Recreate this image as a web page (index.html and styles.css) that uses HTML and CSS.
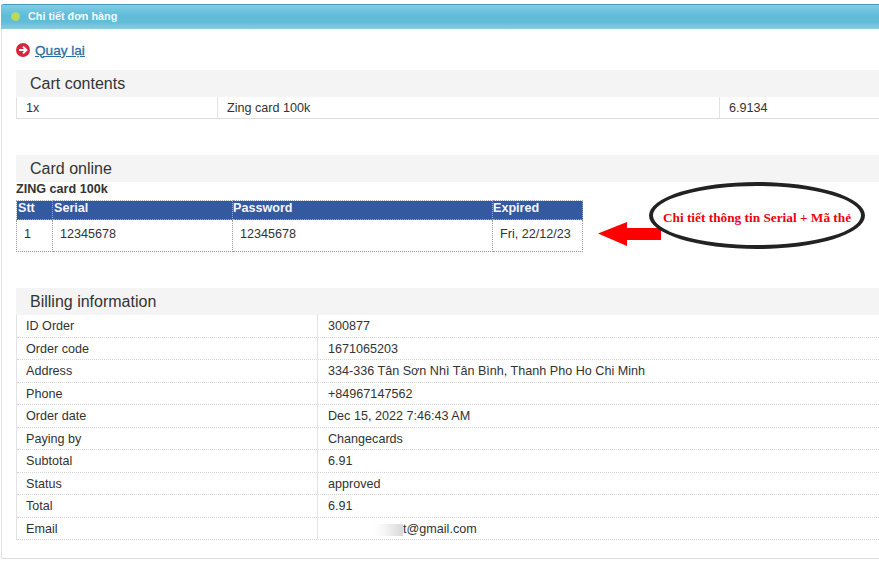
FILE: index.html
```html
<!DOCTYPE html>
<html lang="vi">
<head>
<meta charset="utf-8">
<title>Chi tiết đơn hàng</title>
<link rel="stylesheet" href="styles.css">
</head>
<body>
<div class="panel">
  <div class="panel-head"><span class="dot"></span><span class="panel-title">Chi tiết đơn hàng</span></div>
  <div class="panel-body">
    <div class="back">
      <svg class="back-icon" width="14" height="14" viewBox="0 0 14 14"><circle cx="7" cy="7" r="7" fill="#d9263f"/><path d="M3 7h7M7 3.6 10.4 7 7 10.4" fill="none" stroke="#fff" stroke-width="2"/></svg>
      <a class="back-link" href="#">Quay lại</a>
    </div>

    <h2 class="sec-title">Cart contents</h2>
    <div class="cart-row">
      <div class="cart-cell c1">1x</div>
      <div class="cart-cell c2">Zing card 100k</div>
      <div class="cart-cell c3">6.9134</div>
    </div>

    <h2 class="sec-title sec-card">Card online</h2>
    <div class="card-name">ZING card 100k</div>
    <table class="cards">
      <thead>
        <tr><th class="w1">Stt</th><th class="w2">Serial</th><th class="w3">Password</th><th class="w4">Expired</th></tr>
      </thead>
      <tbody>
        <tr><td>1</td><td>12345678</td><td>12345678</td><td>Fri, 22/12/23</td></tr>
      </tbody>
    </table>

    <h2 class="sec-title sec-card">Billing information</h2>
    <div class="bill">
      <div class="bill-row"><div class="k">ID Order</div><div class="v">300877</div></div>
      <div class="bill-row"><div class="k">Order code</div><div class="v">1671065203</div></div>
      <div class="bill-row"><div class="k">Address</div><div class="v">334-336 Tân Sơn Nhì Tân Bình, Thanh Pho Ho Chi Minh</div></div>
      <div class="bill-row"><div class="k">Phone</div><div class="v">+84967147562</div></div>
      <div class="bill-row"><div class="k">Order date</div><div class="v">Dec 15, 2022 7:46:43 AM</div></div>
      <div class="bill-row"><div class="k">Paying by</div><div class="v">Changecards</div></div>
      <div class="bill-row"><div class="k">Subtotal</div><div class="v">6.91</div></div>
      <div class="bill-row"><div class="k">Status</div><div class="v">approved</div></div>
      <div class="bill-row"><div class="k">Total</div><div class="v">6.91</div></div>
      <div class="bill-row"><div class="k">Email</div><div class="v email"><span class="blur"></span>t@gmail.com</div></div>
    </div>
  </div>
</div>

<svg class="arrow" width="64" height="26" viewBox="0 0 64 26"><path d="M0 12.5 29 1v6h34v12H29v6z" fill="#f00"/></svg>
<div class="callout"><span class="callout-text">Chi tiết thông tin Serial + Mã thẻ</span></div>
</body>
</html>
```
FILE: styles.css
```css
* { box-sizing: border-box; }
html, body { margin: 0; padding: 0; background: #fff; }
body {
  width: 879px;
  height: 568px;
  overflow: hidden;
  position: relative;
  font-family: "Liberation Sans", Arial, sans-serif;
  font-size: 12.6px;
  color: #333;
  padding-top: 4px;
  padding-left: 1px;
}
.panel {
  height: 555px;
  border-left: 1px solid #e2e2e2;
  border-bottom: 1px solid #ddd;
}
.panel-head {
  height: 25px;
  margin-left: -1px;
  border-top: 1px solid #3f9dbf;
  border-radius: 3px 0 0 0;
  background: linear-gradient(#7fcde3 0%, #5fbcd9 45%, #62bcd8 70%, #8ccbdf 100%);
  display: flex;
  align-items: center;
  padding-left: 10px;
  padding-bottom: 2px;
}
.dot {
  width: 9px;
  height: 9px;
  border-radius: 50%;
  background: radial-gradient(circle, #c4d84a 0 30%, #a6dc74 65%, #8fd6a0 100%);
  margin-right: 8px;
}
.panel-title {
  color: #f2fbff;
  font-size: 10.8px;
  font-weight: bold;
}
.panel-body { padding: 12px 0 0 14px; }
.back {
  display: flex;
  align-items: center;
  gap: 5px;
  height: 18px;
}
.back-link {
  color: #2a6ea8;
  font-size: 13.6px;
  text-decoration: underline;
  -webkit-text-stroke: .3px #2a6ea8;
}
.sec-title {
  margin: 11px 0 0;
  height: 27px;
  line-height: 27px;
  background: #f4f4f4;
  padding-left: 14px;
  font-size: 16px;
  font-weight: normal;
  color: #333;
}
.sec-card { margin-top: 36px; }
.cart-row {
  display: flex;
  height: 22px;
  border-left: 1px solid #e2e2e7;
  border-bottom: 1px solid #dcdce2;
  line-height: 22px;
}
.cart-cell { padding-left: 9px; }
.c1 { width: 200px; }
.c2 { width: 502px; border-left: 1px solid #e2e2e7; }
.c3 { flex: 1; border-left: 1px solid #e2e2e7; }
.card-name {
  height: 18px;
  line-height: 15px;
  font-weight: bold;
}
.cards {
  border-collapse: collapse;
  table-layout: fixed;
  width: 566px;
  height: 51px;
}
.cards th {
  background: #33599f;
  color: #f4f6ff;
  text-align: left;
  font-size: 12.6px;
  font-weight: bold;
  height: 19px;
  padding: 0 1px;
  line-height: 15px;
  border: 1px dotted #9aa8c4;
  vertical-align: top;
}
.cards td {
  border: 1px dotted #999;
  padding: 0 0 4px 7px;
  height: 32px;
}
.w1 { width: 36px; }
.w2 { width: 180px; }
.w3 { width: 260px; }
.w4 { width: 90px; }
.cards .w3, .cards .w4 { padding-left: 0; }
.bill { border-left: 1px solid #e2e2e7; }
.bill-row {
  display: flex;
  height: 22.5px;
  line-height: 22px;
  border-bottom: 1px dotted #d4d4d4;
}
.k { width: 301px; padding-left: 9px; border-right: 1px solid #e2e2e7; }
.v { flex: 1; padding-left: 10px; }
.email { position: relative; padding-left: 85px; }
.blur {
  position: absolute;
  left: 11px;
  top: 6px;
  width: 74px;
  height: 12px;
  background: linear-gradient(90deg, #fff 0 60%, #eee 75%, #bbb 98%);
  opacity: .55;
}
.arrow {
  position: absolute;
  left: 598px;
  top: 221px;
}
.callout {
  position: absolute;
  left: 649px;
  top: 182px;
  width: 216px;
  height: 67px;
  border: 4px solid #222;
  border-radius: 50%;
  background: #fff;
  display: flex;
  align-items: center;
  justify-content: center;
}
.callout-text {
  color: #f00010;
  font-family: "Liberation Serif", "Times New Roman", serif;
  font-size: 13.3px;
  font-weight: bold;
  white-space: nowrap;
  padding-top: 5px;
}
```
